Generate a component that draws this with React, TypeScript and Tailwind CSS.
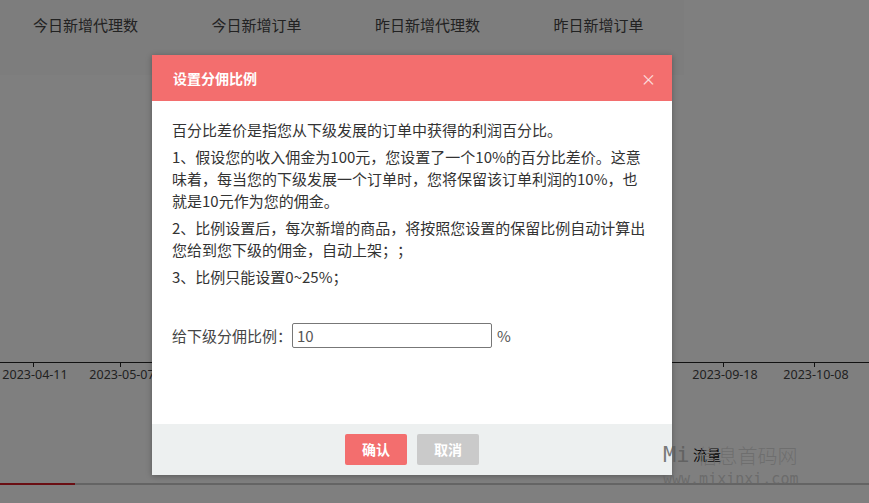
import React from "react";

const stats = ["今日新增代理数", "今日新增订单", "昨日新增代理数", "昨日新增订单"];

const ticks = [
  { x: 33, label: "2023-04-11" },
  { x: 120, label: "2023-05-07" },
  { x: 207, label: "2023-05-27" },
  { x: 294, label: "2023-06-16" },
  { x: 381, label: "2023-07-06" },
  { x: 468, label: "2023-07-26" },
  { x: 552, label: "2023-08-12" },
  { x: 636, label: "2023-08-29" },
  { x: 723, label: "2023-09-18" },
  { x: 814, label: "2023-10-08" },
];

function Chart() {
  return (
    <svg width="869" height="330" className="block">
      <line x1="0" y1="287.5" x2="869" y2="287.5" stroke="#222" strokeWidth="1" />
      {ticks.map((t) => (
        <g key={t.label}>
          <line x1={t.x + 0.5} y1="287" x2={t.x + 0.5} y2="292" stroke="#222" />
          <text
            x={t.x + 2}
            y="304"
            textAnchor="middle"
            fontSize="12.5"
            fill="#444"
            fontFamily="'Noto Sans', 'Liberation Sans', sans-serif"
          >
            {t.label}
          </text>
        </g>
      ))}
    </svg>
  );
}

export default function App() {
  return (
    <div className="relative w-[869px] h-[503px] overflow-hidden bg-white font-['Noto_Sans_CJK_SC','Noto_Sans',sans-serif] [text-spacing-trim:space-all]">
      {/* page under the mask */}
      <div className="flex h-[75px]">
        <div className="flex w-[684px] bg-[#fafafa]">
          {stats.map((s) => (
            <div key={s} className="w-[171px] h-[50px] flex items-center justify-center text-[15px] text-[#444]">
              {s}
            </div>
          ))}
        </div>
        <div className="flex-1 bg-white" />
      </div>
      <Chart />
      <div className="h-[98px] flex flex-col">
        <div className="flex justify-end pt-[39px] h-[78px]">
          <div className="w-[176px] text-[14px] text-[#111]">流量</div>
        </div>
        <div className="flex h-[2px]">
          <div className="w-[75px] bg-[#d41c26]" />
          <div className="flex-1 bg-[#c8c8c8]" />
        </div>
      </div>

      {/* mask */}
      <div className="absolute inset-0 bg-black/50" />

      {/* dialog */}
      <div className="absolute left-[152px] top-[55px] w-[520px] bg-white shadow-[0_1px_6px_rgba(0,0,0,0.3)]">
        <div className="h-[46px] bg-[#f36e6e] pl-[21px] pr-[16px] flex items-center justify-between">
          <span className="text-[14px] font-bold text-white">设置分佣比例</span>
          <span className="text-[15px] leading-none text-white/80">×</span>
        </div>
        <div className="h-[323px] px-[20px] pt-[18px] text-[15px] leading-[22px] text-[#333]">
          <p className="mb-[5px]">百分比差价是指您从下级发展的订单中获得的利润百分比。</p>
          <p className="mb-[5px]">
            1、假设您的收入佣金为100元，您设置了一个10%的百分比差价。这意味着，每当您的下级发展一个订单时，您将保留该订单利润的10%，也就是10元作为您的佣金。
          </p>
          <p className="mb-[5px]">2、比例设置后，每次新增的商品，将按照您设置的保留比例自动计算出您给到您下级的佣金，自动上架；；</p>
          <p>3、比例只能设置0~25%；</p>
          <div className="mt-[35px] flex items-center">
            <span className="text-[#444]">给下级分佣比例：</span>
            <input
              defaultValue="10"
              className="w-[200px] h-[25px] border border-[#777] rounded-[2px] px-[4px] text-[15px] text-[#555] outline-none"
            />
            <span className="ml-[5px] text-[#555]">%</span>
          </div>
        </div>
        <div className="h-[51px] bg-[#edf0f0] flex items-center justify-center gap-[10px]">
          <button className="w-[62px] h-[31px] rounded-[2px] bg-[#f36e6e] text-[14px] font-bold text-white">确认</button>
          <button className="w-[62px] h-[31px] rounded-[2px] bg-[#cacaca] text-[14px] font-bold text-white">取消</button>
        </div>
      </div>

      {/* watermark */}
      <div className="absolute left-[663px] top-[444px] leading-none text-[#5a5a5a]/80">
        <div className="flex items-end gap-[8px]">
          <span className="text-[22px] font-['DejaVu_Sans_Mono',monospace]">Mi</span>
          <span className="text-[20px] font-['Noto_Sans_CJK_SC',serif] font-light text-[#6a6a6a]/80">信息首码网</span>
        </div>
        <div className="mt-[6px] text-[15px] font-['DejaVu_Sans_Mono',monospace] text-[#666]/80">www.mixinxi.com</div>
      </div>
    </div>
  );
}
